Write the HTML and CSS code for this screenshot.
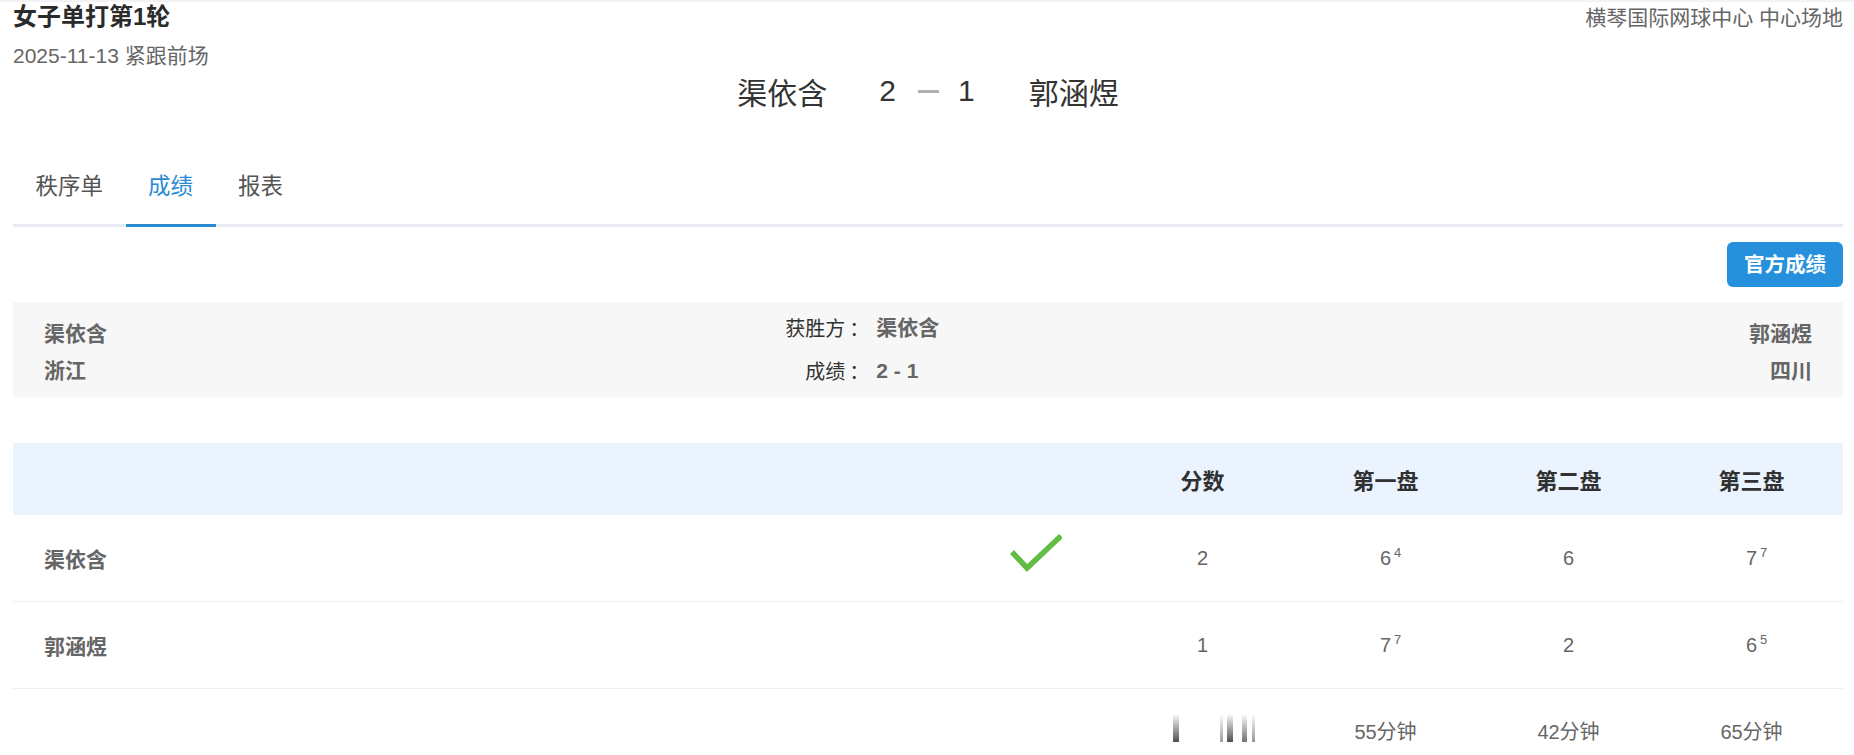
FILE: index.html
```html
<!DOCTYPE html>
<html lang="zh-CN">
<head>
<meta charset="utf-8">
<title>女子单打第1轮</title>
<link rel="stylesheet" href="styles.css">
</head>
<body>
<div class="page">
  <header class="top">
    <div class="top-left">
      <h1 class="title">女子单打第1轮</h1>
      <div class="date">2025-11-13 紧跟前场</div>
    </div>
    <div class="venue">横琴国际网球中心 中心场地</div>
  </header>

  <div class="scoreline">
    <span class="sl-name sl-home">渠依含</span>
    <span class="sl-num">2</span>
    <span class="sl-dash"></span>
    <span class="sl-num sl-one">1</span>
    <span class="sl-name sl-away">郭涵煜</span>
  </div>

  <nav class="tabs">
    <div class="tab">秩序单</div>
    <div class="tab active">成绩</div>
    <div class="tab">报表</div>
  </nav>

  <div class="actions">
    <button class="btn">官方成绩</button>
  </div>

  <section class="panel">
    <div class="side">
      <div>渠依含</div>
      <div>浙江</div>
    </div>
    <div class="mid">
      <div class="label">获胜方<span class="colon">：</span></div><div class="value">渠依含</div>
      <div class="label">成绩<span class="colon">：</span></div><div class="value">2 - 1</div>
    </div>
    <div class="side right">
      <div>郭涵煜</div>
      <div>四川</div>
    </div>
  </section>

  <section class="table">
    <div class="row thead">
      <div class="cell"></div>
      <div class="cell"></div>
      <div class="cell">分数</div>
      <div class="cell">第一盘</div>
      <div class="cell">第二盘</div>
      <div class="cell">第三盘</div>
    </div>
    <div class="row trow">
      <div class="name">渠依含</div>
      <div class="cell check">
        <svg width="52" height="40" viewBox="0 0 52 40"><polyline points="2,19 17,35 51,3" fill="none" stroke="#62bd43" stroke-width="5.5"/></svg>
      </div>
      <div class="cell num">2</div>
      <div class="cell num"><span class="base">6<sup class="sup">4</sup></span></div>
      <div class="cell num">6</div>
      <div class="cell num"><span class="base">7<sup class="sup">7</sup></span></div>
    </div>
    <div class="row trow">
      <div class="name">郭涵煜</div>
      <div class="cell"></div>
      <div class="cell num">1</div>
      <div class="cell num"><span class="base">7<sup class="sup">7</sup></span></div>
      <div class="cell num">2</div>
      <div class="cell num"><span class="base">6<sup class="sup">5</sup></span></div>
    </div>
    <div class="row trow last">
      <div class="name"></div>
      <div class="cell"></div>
      <div class="cell">
        <div class="bars">
          <i class="bar b1"></i><i class="bar b2"></i><i class="bar b3"></i><i class="bar b4"></i><i class="bar b5"></i>
        </div>
      </div>
      <div class="cell num">55分钟</div>
      <div class="cell num">42分钟</div>
      <div class="cell num">65分钟</div>
    </div>
  </section>
</div>
</body>
</html>
```
FILE: styles.css
```css
* { box-sizing: content-box; }

body {
  margin: 0;
  border-top: 2px solid #f3f3f5;
  background: #fff;
  color: #333;
  font-family: "Liberation Sans", "Noto Sans CJK SC", sans-serif;
}

.page {
  padding: 0 11px 0 13px;
}

.top {
  display: flex;
  justify-content: space-between;
  align-items: flex-start;
}

.title {
  margin: 0;
  font-size: 24px;
  line-height: 30px;
  font-weight: 700;
  color: #2b2b2b;
}

.date {
  margin-top: 10px;
  font-size: 21px;
  line-height: 28px;
  color: #666;
}

.venue {
  font-size: 21px;
  line-height: 32px;
  color: #666;
}

.scoreline {
  margin-top: 1px;
  height: 40px;
  display: flex;
  justify-content: center;
  align-items: center;
  font-size: 30px;
  color: #333;
}

.sl-home { margin-right: 52px; }
.sl-away { margin-left: 54px; }
.sl-one { margin-left: 19px; }

.sl-dash {
  width: 21px;
  height: 3px;
  margin-left: 22px;
  background: #b0b0b0;
}

.tabs {
  margin-top: 39px;
  display: flex;
  border-bottom: 3px solid #e8ebf4;
}

.tab {
  padding: 0 22.5px;
  line-height: 74px;
  font-size: 22.5px;
  color: #555;
  border-bottom: 3px solid transparent;
  margin-bottom: -3px;
}

.tab.active {
  color: #2a8bd5;
  border-bottom-color: #2a8bd5;
}

.actions {
  margin-top: 15px;
  display: flex;
  justify-content: flex-end;
}

.btn {
  height: 45px;
  padding: 0 17px;
  border: 0;
  border-radius: 6px;
  background: #2690dc;
  color: #fff;
  font-family: inherit;
  font-size: 20.5px;
  font-weight: 700;
  line-height: 45px;
}

.panel {
  margin-top: 15px;
  height: 95px;
  padding: 0 31px;
  background: #f7f7f7;
  display: grid;
  grid-template-columns: 1fr 1fr 1fr;
  align-items: center;
}

.side {
  margin-top: 5px;
  font-size: 21px;
  line-height: 37px;
  font-weight: 700;
  color: #666;
}

.side.right {
  text-align: right;
}

.mid {
  display: grid;
  grid-template-columns: 236px auto;
  column-gap: 7px;
  line-height: 42px;
}

.mid .label {
  text-align: right;
  font-size: 20px;
  color: #333;
}

.colon {
  margin-left: 4px;
  font-family: "Noto Sans CJK TC", "Noto Sans CJK SC", sans-serif;
}

.mid .value {
  font-size: 21px;
  font-weight: 700;
  color: #666;
}

.table {
  margin-top: 46px;
}

.row {
  display: grid;
  grid-template-columns: 1fr 150px repeat(4, 183px);
  align-items: center;
}

.thead {
  height: 72px;
  background: #ebf3fe;
  font-size: 22px;
  font-weight: 700;
  color: #303133;
}

.trow {
  height: 86px;
  border-bottom: 1px solid #f0f0f0;
}

.trow.last {
  border-bottom: 0;
}

.cell {
  text-align: center;
}

.name {
  padding-left: 31px;
  font-size: 21px;
  font-weight: 700;
  color: #666;
}

.num {
  font-size: 20px;
  line-height: 20px;
  color: #666;
}

.base {
  position: relative;
}

.sup {
  position: absolute;
  left: 100%;
  top: -1px;
  margin-left: 3px;
  font-size: 13px;
  line-height: 13px;
  vertical-align: baseline;
}

.check {
  display: flex;
  justify-content: center;
}

.check svg {
  display: block;
  margin-bottom: 11px;
}

.bars {
  display: flex;
  align-items: flex-end;
  justify-content: center;
  height: 27px;
  margin-left: 23px;
  margin-bottom: 7px;
}

.bar {
  display: block;
  height: 27px;
  background: linear-gradient(to bottom, rgba(60, 60, 60, 0.05), rgba(60, 60, 60, 0.9));
}

.b1 { width: 6px; }
.b2 { width: 3px; margin-left: 41px; opacity: 0.55; }
.b3 { width: 6px; margin-left: 4px; }
.b4 { width: 5px; margin-left: 9px; opacity: 0.8; }
.b5 { width: 3px; margin-left: 5px; opacity: 0.6; }
```
